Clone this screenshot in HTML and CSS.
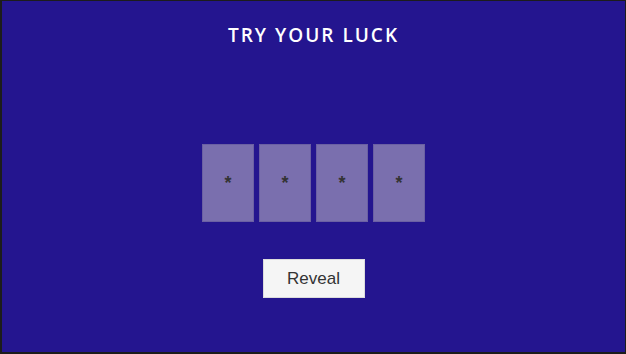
FILE: index.html
```html
<!DOCTYPE html>
<html lang="en">
<head>
    <meta charset="UTF-8">
    <meta name="viewport" content="width=device-width, initial-scale=1.0">
    <title>Try Your Luck</title>
    <link rel="stylesheet" href="styles.css">
</head>
<body>
    <div class="game">
        <h1 class="title">TRY YOUR LUCK</h1>
        <div class="cards">
            <div class="card">*</div>
            <div class="card">*</div>
            <div class="card">*</div>
            <div class="card">*</div>
        </div>
        <button class="reveal-btn">Reveal</button>
    </div>
</body>
</html>
```

FILE: styles.css
```css
html, body {
    margin: 0;
    padding: 0;
}
body {
    width: 626px;
    height: 354px;
    background: #1c1c1c;
    font-family: "Liberation Sans", Arial, sans-serif;
}
.game {
    box-sizing: border-box;
    width: 626px;
    height: 354px;
    border: 1px solid #1c1c1c;
    border-left-width: 2px;
    border-bottom-width: 2px;
    background: #24158f;
    display: flex;
    flex-direction: column;
    align-items: center;
}
.title {
    margin: 22px 0 0 0;
    color: #ffffff;
    font-family: "Open Sans", sans-serif;
    font-size: 19px;
    font-weight: 600;
    letter-spacing: 2px;
    line-height: 24px;
}
.cards {
    display: flex;
    gap: 5px;
    margin-top: 97px;
}
.card {
    box-sizing: border-box;
    width: 52px;
    height: 78px;
    background: #7a6fae;
    border: 1px solid #6b60a3;
    color: #333333;
    font-size: 18px;
    font-weight: 700;
    display: flex;
    align-items: center;
    justify-content: center;
}
.reveal-btn {
    margin-top: 37px;
    width: 102px;
    height: 39px;
    background: #f5f5f5;
    border: 1px solid #dcdcdc;
    color: #333333;
    font-family: "Liberation Sans", Arial, sans-serif;
    font-size: 17px;
    padding: 0;
}
```
